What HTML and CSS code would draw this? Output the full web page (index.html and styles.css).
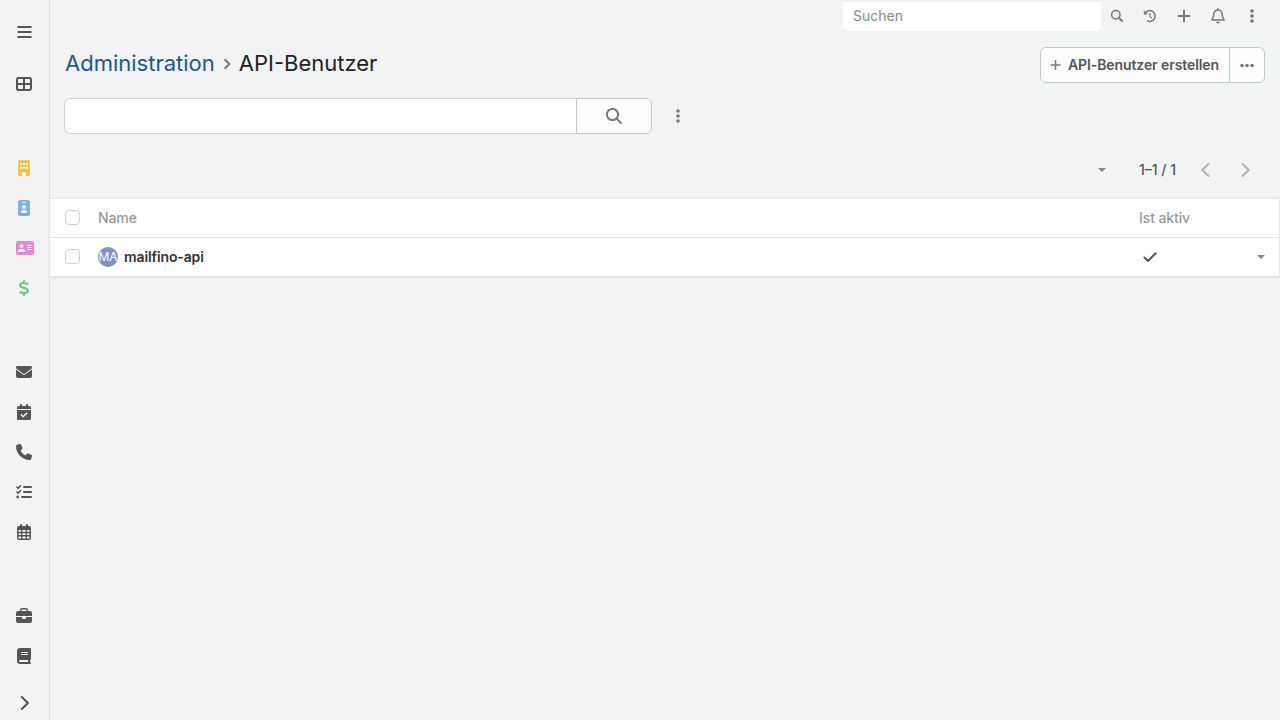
FILE: index.html
```html
<!DOCTYPE html>
<html lang="de">
<head>
	<meta charset="utf-8">
	<title>API-Benutzer</title>
	<link rel="stylesheet" href="styles.css">
</head>
<body>
<div class="page">
	<nav class="sidebar">
		<a class="item menu"><svg width="16" height="16" viewBox="0 0 16 16"><path class="line" d="M1.500 3h14M1.500 8h14M1.500 13h14"/></svg></a>
		<a class="item home"><svg width="16" height="16" viewBox="0 0 16 16"><rect class="line" x="1" y="2" width="14" height="12" rx="1.4"/><path class="line" d="M8 2v12M1 8h14"/></svg></a>

		<div class="group">
			<a class="item yellow"><svg width="16" height="16" viewBox="0 0 16 16"><path fill-rule="evenodd" d="M3.500 0h9A1.500 1.500 0 0 1 14 1.500v13a1.500 1.500 0 0 1-1.500 1.500H10v-2a2 2 0 0 0-4 0v2H3.500A1.500 1.500 0 0 1 2 14.500v-13A1.500 1.500 0 0 1 3.500 0zM4 3v2h2V3zM7 3v2h2V3zM10 3v2h2V3zM4 7v2h2V7zM7 7v2h2V7zM10 7v2h2V7z"/></svg></a>
			<a class="item blue"><svg width="16" height="16" viewBox="0 0 16 16"><path fill-rule="evenodd" d="M4 0h8a2 2 0 0 1 2 2v12a2 2 0 0 1-2 2H4a2 2 0 0 1-2-2V2a2 2 0 0 1 2-2zM6.500 2a.5.5 0 0 0 0 1h3a.5.5 0 0 0 0-1zM8 5a2 2 0 1 0 0 4a2 2 0 0 0 0-4zM7.300 10A2.500 2.500 0 0 0 4.800 12.500q0 .5.5.5h5.400q.5 0 .5-.5A2.500 2.500 0 0 0 8.700 10z"/></svg></a>
			<a class="item pink"><svg width="18" height="16" viewBox="0 0 18 16"><path fill-rule="evenodd" d="M2 1h14a2 2 0 0 1 2 2v10a2 2 0 0 1-2 2H2a2 2 0 0 1-2-2V3a2 2 0 0 1 2-2zM5.500 4a2 2 0 1 0 0 4a2 2 0 0 0 0-4zM4.700 9A2.700 2.700 0 0 0 2 11.600q0 .4.4.4h6.200q.4 0 .4-.4A2.700 2.700 0 0 0 6.300 9zM11.500 5a.5.5 0 0 0 0 1h4a.5.5 0 0 0 0-1zM11.500 7a.5.5 0 0 0 0 1h4a.5.5 0 0 0 0-1zM11.500 9a.5.5 0 0 0 0 1h4a.5.5 0 0 0 0-1z"/></svg></a>
			<a class="item green"><svg width="16" height="16" viewBox="0 0 16 16"><path class="line round" d="M8 1v2M8 13v2M11.600 3.800C10 3.200 8.900 2.900 7.800 2.900C5.500 2.900 4 3.700 4 5.300C4 7 5.700 7.400 8 7.900C10.400 8.400 12 9 12 10.700C12 12.300 10.500 13.100 8.200 13.100C7 13.100 5.800 12.800 4.300 12.200"/></svg></a>
		</div>

		<div class="group">
			<a class="item"><svg width="16" height="16" viewBox="0 0 512 512"><path d="M48 64C21.500 64 0 85.500 0 112c0 15.100 7.100 29.300 19.200 38.400L236.800 313.600c11.400 8.500 27 8.500 38.400 0L492.800 150.400c12.100-9.100 19.200-23.300 19.200-38.400c0-26.500-21.500-48-48-48H48zM0 176V384c0 35.300 28.700 64 64 64H448c35.300 0 64-28.700 64-64V176L294.400 339.200c-22.800 17.100-54 17.100-76.800 0L0 176z"/></svg></a>
			<a class="item"><svg width="16" height="16" viewBox="0 0 16 16"><path d="M2.500 2H4V1a1 1 0 0 1 2 0v1h4V1a1 1 0 0 1 2 0v1h1.500A1.500 1.500 0 0 1 15 3.500V5H1V3.500A1.500 1.500 0 0 1 2.500 2zM1 6h14v8.500a1.500 1.500 0 0 1-1.500 1.500h-11A1.500 1.500 0 0 1 1 14.500z"/><path class="cut" d="M5 10.500l2.200 2.200L11.100 8.800"/></svg></a>
			<a class="item"><svg width="16" height="16" viewBox="0 0 512 512"><path d="M164.900 24.600c-7.700-18.600-28-28.500-47.400-23.200l-88 24C12.100 30.200 0 46 0 64C0 311.400 200.600 512 448 512c18 0 33.800-12.100 38.600-29.500l24-88c5.300-19.400-4.600-39.700-23.200-47.400l-96-40c-16.300-6.800-35.200-2.100-46.300 11.600L304.700 368C234.300 334.700 177.300 277.700 144 207.300L193.300 167c13.700-11.200 18.400-30 11.600-46.300l-40-96z"/></svg></a>
			<a class="item"><svg width="16" height="16" viewBox="0 0 16 16"><path class="line round" d="M8 3h7M8 8h7M6 13h9"/><path class="line thin round" d="M.9 3l1.300 1.300L4.500 1.800M.9 8l1.300 1.300L4.500 6.800"/><circle cx="1.700" cy="13" r="1.400"/></svg></a>
			<a class="item"><svg width="16" height="16" viewBox="0 0 16 16"><path fill-rule="evenodd" d="M3 2h1V1a1 1 0 0 1 2 0v1h4V1a1 1 0 0 1 2 0v1h1a2 2 0 0 1 2 2v10a2 2 0 0 1-2 2H3a2 2 0 0 1-2-2V4a2 2 0 0 1 2-2zM2.500 6v1.800H5V6zM6.300 6v1.800h3.400V6zM11 6v1.800h2.500V6zM2.500 9.200v1.900H5V9.200zM6.300 9.200v1.900h3.400V9.200zM11 9.200v1.900h2.500V9.200zM2.500 12.500V14a.5.5 0 0 0 .5.5h2v-2zM6.300 12.500v2h3.400v-2zM11 12.500v2h2a.5.5 0 0 0 .5-.5v-1.500z"/></svg></a>
		</div>

		<div class="group">
			<a class="item"><svg width="16" height="16" viewBox="0 0 16 16"><path fill-rule="evenodd" d="M4 3V2a2 2 0 0 1 2-2h4a2 2 0 0 1 2 2v1h2a2 2 0 0 1 2 2v3H0V5a2 2 0 0 1 2-2zM5.500 3h5V2a.5.5 0 0 0-.5-.5H6a.5.5 0 0 0-.5.5zM0 9h6v1a1 1 0 0 0 1 1h2a1 1 0 0 0 1-1V9h6v4a2 2 0 0 1-2 2H2a2 2 0 0 1-2-2z"/></svg></a>
			<a class="item"><svg width="16" height="16" viewBox="0 0 16 16"><path fill-rule="evenodd" d="M4 0h10a1 1 0 0 1 1 1v10a1 1 0 0 1-1 1v2a1 1 0 0 1 0 2H4a3 3 0 0 1-3-3V3a3 3 0 0 1 3-3zM5.500 4a.5.5 0 0 0 0 1h6a.5.5 0 0 0 0-1zM5.500 6a.5.5 0 0 0 0 1h6a.5.5 0 0 0 0-1zM4 12a1 1 0 0 0 0 2h8v-2z"/></svg></a>
		</div>

		<a class="item expand"><svg width="16" height="16" viewBox="0 0 16 16"><path class="line round" d="M5.800 2L12 8l-6.200 6"/></svg></a>
	</nav>

	<main class="content">
		<div class="topbar">
			<div class="global-search">Suchen</div>
			<a class="top-icon find"><svg width="14" height="14" viewBox="0 0 14 14"><circle class="line thin" cx="5.800" cy="5.800" r="4.200"/><path class="line" d="M8.900 8.900l3.600 3.600"/></svg></a>
			<a class="top-icon"><svg width="14" height="14" viewBox="0 0 14 14"><path class="line thin" d="M2.200 4A5.400 5.400 0 1 1 4 11.700"/><path class="line hand" d="M7 4v3.300l2 2"/><path d="M.8 1.300v4.300h4.300z"/></svg></a>
			<a class="top-icon"><svg width="14" height="14" viewBox="0 0 14 14"><path class="line" d="M7 .8v12.400M.8 7h12.400"/></svg></a>
			<a class="top-icon"><svg width="14" height="16" viewBox="0 0 14 16"><path class="line thin" d="M7 .3v1.700M7 2A4.200 4.200 0 0 0 2.800 6.200C2.800 9.100 2 10.200 1.100 11.300V12h11.800v-.7C12 10.200 11.200 9.100 11.200 6.200A4.200 4.200 0 0 0 7 2z"/><path d="M5.200 13.700h3.600a1.800 1.800 0 0 1-3.600 0z"/></svg></a>
			<a class="top-icon"><svg width="14" height="14" viewBox="0 0 14 14"><circle cx="7" cy="2" r="1.800"/><circle cx="7" cy="7" r="1.800"/><circle cx="7" cy="12" r="1.800"/></svg></a>
		</div>

		<div class="page-header">
			<h3 class="title"><a class="link">Administration</a><svg class="chevron" width="9" height="14" viewBox="0 0 9 14"><path class="line" d="M1.600 2.200L6.400 7l-4.800 4.800"/></svg><span>API-Benutzer</span></h3>
			<div class="btn-group">
				<a class="btn"><svg width="11" height="12" viewBox="0 0 11 12"><path class="line thin" d="M5.500 1v10M.5 6h10"/></svg>API-Benutzer erstellen</a>
				<a class="btn more"><svg width="14" height="14" viewBox="0 0 14 14"><circle cx="2" cy="7.500" r="1.800"/><circle cx="7" cy="7.500" r="1.800"/><circle cx="12" cy="7.500" r="1.800"/></svg></a>
			</div>
		</div>

		<div class="search-row">
			<div class="search-group">
				<input class="search-input" type="text">
				<a class="search-btn"><svg width="18" height="18" viewBox="0 0 18 18"><circle class="line" cx="7.500" cy="7.500" r="5.600"/><path class="line" d="M11.600 11.600l5 5"/></svg></a>
			</div>
			<svg class="search-more" width="14" height="14" viewBox="0 0 14 14"><circle cx="7" cy="2" r="1.800"/><circle cx="7" cy="7" r="1.800"/><circle cx="7" cy="12" r="1.800"/></svg>
		</div>

		<div class="pager">
			<span class="caret"></span>
			<span class="count">1–1 / 1</span>
			<svg width="16" height="16" viewBox="0 0 16 16"><path class="line round" d="M11.500 2L5.200 8l6.300 6"/></svg>
			<svg width="16" height="16" viewBox="0 0 16 16"><path class="line round" d="M5.500 2L11.800 8l-6.300 6"/></svg>
		</div>

		<div class="list">
			<div class="row head">
				<span class="check"></span>
				<span class="name">Name</span>
				<span class="active">Ist aktiv</span>
			</div>
			<div class="row">
				<span class="check"></span>
				<span class="name"><svg class="avatar" width="20" height="20" viewBox="0 0 20 20"><circle cx="10" cy="10" r="10"/><text x="10" y="14" text-anchor="middle">MA</text></svg>mailfino-api</span>
				<span class="active"><svg width="14" height="14" viewBox="0 0 14 14"><path class="line round" d="M1.500 7.500l3.500 3.500L12.700 3.200"/></svg></span>
				<span class="caret"></span>
			</div>
		</div>
	</main>
</div>
</body>
</html>
```
FILE: styles.css
```css
*{
	box-sizing: border-box;
}
body{
	margin: 0;
	background: #f1f3f5;
	color: #555;
	font-family: Inter, "Liberation Sans", sans-serif;
	font-size: 14px;
	line-height: 20px;
}
svg{
	display: block;
	fill: currentColor;
	flex: none;
}
.line{
	fill: none;
	stroke: currentColor;
	stroke-width: 2;
}
.thin{
	stroke-width: 1.5;
}
.hand{
	stroke-width: 1.2;
}
.round{
	stroke-linecap: round;
	stroke-linejoin: round;
}
.cut{
	fill: none;
	stroke: #f1f3f5;
	stroke-width: 1.6;
}
.page{
	display: flex;
	height: 720px;
	overflow: hidden;
}

/* sidebar */
.sidebar{
	width: 50px;
	border-right: 1px solid #dee1e3;
	padding-top: 12px;
	display: flex;
	flex-direction: column;
	flex: none;
}
.item{
	height: 40px;
	padding-left: 16px;
	display: flex;
	align-items: center;
	flex: none;
}
.home{
	margin-top: 12px;
}
.group{
	margin-top: 44px;
}
.yellow{
	color: #edc555;
}
.blue{
	color: #7fb0de;
}
.pink{
	color: #d88fca;
}
.green{
	color: #6fc97d;
}
.expand{
	margin-top: 7px;
}

/* top bar */
.content{
	flex: 1;
	min-width: 0;
}
.topbar{
	height: 31px;
	display: flex;
	justify-content: flex-end;
	align-items: center;
	padding-right: 11px;
	color: #777;
}
.global-search{
	width: 258px;
	height: 29px;
	margin-top: 2px;
	padding: 4px 10px;
	background: #fff;
	border-radius: 0 0 5px 5px;
	color: #888;
}
.top-icon{
	width: 34px;
	display: flex;
	justify-content: center;
}
.find{
	width: 32px;
}

.page-header{
	height: 52px;
	padding: 16px 15px 0;
	display: flex;
	justify-content: space-between;
}
.title{
	margin: 0;
	display: flex;
	align-items: center;
	height: 32px;
	font-size: 22px;
	font-weight: 400;
	color: #222;
}
.link{
	color: #20588f;
}
.chevron{
	margin: 2px 7px 0 8px;
	color: #777;
}
.btn-group{
	display: flex;
	height: 36px;
	background: #fdfdfd;
	border: 1px solid #bfc9cc;
	border-radius: 6px;
}
.btn{
	display: flex;
	align-items: center;
	gap: 7px;
	padding: 0 10px 0 9px;
	font-weight: 600;
	letter-spacing: -.09px;
}
.btn svg{
	color: #777;
}
.more{
	width: 35px;
	padding: 0;
	justify-content: center;
	border-left: 1px solid #bfc9cc;
}

/* search */
.search-row{
	display: flex;
	align-items: center;
	margin: 15px 0 0 14px;
	color: #777;
}
.search-group{
	display: flex;
	width: 588px;
	height: 36px;
}
.search-input{
	width: 512px;
	border: 1px solid #cfd3d6;
	border-right: 0;
	border-radius: 6px 0 0 6px;
	background: #fff;
	outline: none;
}
.search-btn{
	width: 76px;
	display: flex;
	align-items: center;
	justify-content: center;
	border: 1px solid #bfc9cc;
	border-radius: 0 6px 6px 0;
	background: #fdfdfd;
}
.search-more{
	margin-left: 19px;
}

.pager{
	height: 64px;
	padding: 8px 27px 0 0;
	display: flex;
	justify-content: flex-end;
	align-items: center;
	color: #b0b2b4;
}
.count{
	width: 58px;
	margin-left: 33px;
	color: #555;
	font-weight: 500;
}
.pager svg + svg{
	margin-left: 24px;
}
.caret{
	border: 4px solid transparent;
	border-top-color: #888;
	border-bottom: 0;
}

/* list */
.list{
	background: #fff;
	border: 1px solid #e5e8ea;
	border-left: 0;
	border-bottom: 0;
	box-shadow: 0 1px 2px 1px #dfe3e7;
}
.row{
	height: 38px;
	display: flex;
	align-items: center;
	padding: 0 14px 0 15px;
}
.head{
	height: 39px;
	border-bottom: 1px solid #dee1e3;
	color: #999;
}
.check{
	width: 15px;
	height: 15px;
	margin-bottom: 1px;
	border: 1px solid #ccd0d2;
	border-radius: 4px;
	background: #fdfdfd;
}
.name{
	width: 1041px;
	margin-left: 18px;
	display: flex;
	align-items: center;
	gap: 6px;
}
.row .name{
	font-weight: 600;
	letter-spacing: -.12px;
	color: #333;
}
.head .name,
.head .active{
	font-weight: 500;
	letter-spacing: -.1px;
	color: #999;
}
.active{
	flex: 1;
}
.active svg{
	margin-left: 4px;
}
.avatar{
	fill: #7f93c1;
}
.avatar text{
	fill: #fff;
	font-size: 12px;
	font-weight: 400;
}
```
